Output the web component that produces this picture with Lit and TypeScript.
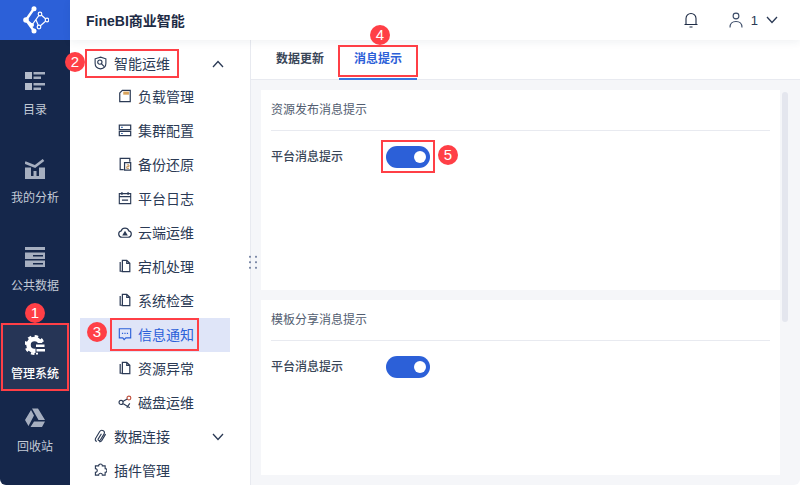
import { css, html, LitElement, svg } from 'lit';
import { customElement } from 'lit/decorators.js';

const pageIcon = svg`<path d="M2.500 3.500v10.500h2M5 1.500h5l3.500 3.500v9.500H5z M10 1.500v3.500h3.500" fill="none" stroke="currentColor" stroke-width="1.400"/>`;

const subIcons: Record<string, unknown> = {
  load: svg`<path d="M5 1.500h9v13H2V4.500z" fill="none" stroke="currentColor" stroke-width="1.400"/><path d="M6 3v3.500h6.500V3" fill="#d9a45c"/>`,
  cluster: svg`<path d="M1.500 2.500h13v5h-13zM1.500 9.500h13v5h-13z" fill="none" stroke="currentColor" stroke-width="1.400"/><path d="M3.500 5h2M3.500 12h2" stroke="#3f6fb0" stroke-width="1.300"/>`,
  backup: svg`<path d="M13.500 5.500V1.500H2.500v13h4" fill="none" stroke="currentColor" stroke-width="1.400"/><path d="M7.500 6.500h7v8.500h-7z" fill="none" stroke="currentColor" stroke-width="1.400"/><path d="M10 9h2.500v2H10v2h2.500" fill="none" stroke="#b8803f" stroke-width="1"/>`,
  log: svg`<path d="M1.500 3h13v11.500h-13zM1.500 6.500h13M4.500 1v3.500M11.500 1v3.500M4.500 10.500h7" fill="none" stroke="currentColor" stroke-width="1.300"/>`,
  cloud: svg`<path d="M4.500 14a3.700 3.700 0 0 1-.8-7.300 4.500 4.500 0 0 1 8.600 0A3.700 3.700 0 0 1 11.500 14z" fill="none" stroke="currentColor" stroke-width="1.400"/><path d="M8 6.500l3.200 5.500H4.800z" fill="currentColor"/>`,
  page: pageIcon,
  chat: svg`<path d="M1.500 2h13v10.500H9l-2 2-1.500-2h-4z" fill="none" stroke="currentColor" stroke-width="1.300"/><path d="M4.500 7.200h1.400M7.300 7.200h1.400M10.100 7.200h1.400" stroke="currentColor" stroke-width="1.500"/>`,
  disk: svg`<circle cx="3.500" cy="8.500" r="2.300" fill="none" stroke="currentColor" stroke-width="1.300"/><circle cx="12.500" cy="3.500" r="2.200" fill="none" stroke="#c0503c" stroke-width="1.300"/><path d="M5.500 7.500l5-2.800M6 10l7.500 4.500M13.500 9.500l-3.500 5" stroke="currentColor" stroke-width="1.300" fill="none"/>`,
};

const chevron = (up: boolean) => html`<svg class="chev" viewBox="0 0 12 8" width="12" height="8">
  <path d=${up ? 'M1 7l5-5.500L11 7' : 'M1 1l5 5.500L11 1'} fill="none" stroke="#2b3a55" stroke-width="1.300" />
</svg>`;

const railItems = [
  {
    label: '目录',
    icon: svg`<path d="M0 1h7v7H0zM0 12h7v7H0z" fill="#b4bccb"/><path d="M8.500 1H20v2.500H8.500zM8.500 5.500H16V8H8.500zM8.500 12H20v2.500H8.500zM8.500 16.500H16V19H8.500z" fill="currentColor"/>`,
  },
  {
    label: '我的分析',
    icon: svg`<path d="M0 3.500l10 4 8.500-6.500" fill="none" stroke="currentColor" stroke-width="2.600"/><path d="M0 8.500h6V17h8V8.500h6V20H0z M8.500 12h3v5h-3z" fill="currentColor"/>`,
  },
  {
    label: '公共数据',
    icon: svg`<path d="M0 0h20v3H0z" fill="currentColor"/><path fill-rule="evenodd" d="M0 5.500h20V12H0zM8 8v1.500h10V8zM0 13.500h20V20H0zM8 16v1.500h10V16z" fill="currentColor"/>`,
  },
  {
    label: '管理系统',
    active: true,
    icon: svg`<circle cx="9.500" cy="10" r="6" fill="none" stroke="#fff" stroke-width="4.500"/><circle cx="9.500" cy="10" r="8.800" fill="none" stroke="#fff" stroke-width="2.400" stroke-dasharray="3.500 3.400"/><path d="M10.500 8h9.500v12h-9.500z" fill="#263556"/><path d="M11 9.500h8.500v2.500H11zM11.500 14h8.500v2.500h-8.500zM11 17.800h2v1.700h-2z" fill="#fff"/>`,
  },
  {
    label: '回收站',
    icon: svg`<path d="M7 .5h6l7 11.500h-6.500zM6 2L9 7.500 3.500 18 0 12zM5.500 19L9 13.500h11L17 19z" fill="currentColor"/>`,
  },
];

const subItems = [
  ['load', '负载管理'],
  ['cluster', '集群配置'],
  ['backup', '备份还原'],
  ['log', '平台日志'],
  ['cloud', '云端运维'],
  ['page', '宕机处理'],
  ['page', '系统检查'],
  ['chat', '信息通知'],
  ['page', '资源异常'],
  ['disk', '磁盘运维'],
];

// red annotation boxes and numbered badges drawn over the screenshot
const marks = [
  { n: 1, x: 35, y: 313, box: [1, 323, 68, 68] },
  { n: 2, x: 75, y: 62, box: [85, 49, 94, 29] },
  { n: 3, x: 97, y: 332, box: [110, 318, 89, 33] },
  { n: 4, x: 380, y: 35, box: [338, 45, 80, 32] },
  { n: 5, x: 448, y: 155, box: [381, 140, 54, 33] },
];

@customElement('app-root')
export class App extends LitElement {
  static styles = css`
    :host {
      display: block;
      width: 800px;
      height: 485px;
      font-family: 'Liberation Sans', 'Noto Sans CJK SC', sans-serif;
      color: #2b3a55;
      --blue: #2c60d8;
    }

    .app {
      position: relative;
      display: flex;
      width: 800px;
      height: 485px;
      overflow: hidden;
      background: #f5f6f9;
      border-radius: 0 0 6px 6px;
    }

    .rail {
      flex: none;
      width: 70px;
      background: #15274b;
      display: flex;
      flex-direction: column;
      color: #a6afc0;
    }

    .logo {
      height: 40px;
      background: var(--blue);
      display: flex;
      align-items: center;
      justify-content: center;
    }

    .rail-item {
      height: 88px;
      display: flex;
      flex-direction: column;
      align-items: center;
      justify-content: flex-end;
      gap: 10px;
      font-size: 12px;
      line-height: 18px;
      color: #c3cad6;
      padding-bottom: 12px;
      box-sizing: border-box;
    }

    .rail-item svg {
      color: #a6afc0;
    }

    .rail-item:nth-child(2) {
      height: 91px;
    }

    .rail-item.active {
      height: 68px;
      margin-top: 16px;
      padding-bottom: 8px;
      background: #263556;
      color: #fff;
      font-weight: 500;
    }

    .rail-item.last {
      height: 77px;
    }

    .main {
      flex: 1;
      display: flex;
      flex-direction: column;
      min-width: 0;
    }

    .top {
      height: 40px;
      flex: none;
      background: #fff;
      display: flex;
      align-items: center;
      padding: 0 22px 0 16px;
      box-shadow: 0 2px 8px rgba(30, 50, 90, 0.07);
      position: relative;
      z-index: 1;
    }

    .brand {
      font-size: 14px;
      font-weight: 700;
      color: #1d2b45;
    }

    .tools {
      margin-left: auto;
      display: flex;
      align-items: center;
      font-size: 13px;
    }

    .tools .user {
      margin-left: 31px;
      margin-right: 8px;
    }

    .tools .chev {
      margin-left: 8px;
    }

    .body {
      flex: 1;
      display: flex;
      min-height: 0;
    }

    .menu {
      flex: none;
      width: 180px;
      background: #fff;
      border-right: 1px solid #e8eaf0;
      padding-top: 7px;
      font-size: 14px;
      color: #2b3a55;
    }

    .row {
      height: 34px;
      display: flex;
      align-items: center;
      gap: 7px;
      padding: 0 0 2px 14px;
      margin-left: 10px;
      position: relative;
      white-space: nowrap;
      box-sizing: border-box;
    }

    .row:first-child {
      height: 33px;
    }

    .row > .chev {
      position: absolute;
      left: 132px;
      top: 13px;
    }

    .row.sub {
      padding-left: 38px;
      margin-right: 20px;
      gap: 6px;
    }

    .row.sub.on {
      background: #dfe5f8;
      color: var(--blue);
    }

    .content {
      flex: 1;
      min-width: 0;
      display: flex;
      flex-direction: column;
      position: relative;
    }

    .tabs {
      flex: none;
      height: 40px;
      background: #fff;
      border-bottom: 1px solid #e8eaf0;
      display: flex;
      padding-left: 25px;
      gap: 16px;
      box-sizing: border-box;
      font-size: 12px;
      font-weight: 700;
    }

    .tab {
      width: 48px;
      text-align: center;
      line-height: 39px;
      height: 40px;
      box-sizing: border-box;
      color: #3a4658;
    }

    .tab.on {
      width: 78px;
      margin-left: -1px;
      color: #2c60d8;
      border-bottom: 2px solid #3a78e0;
    }

    .panels {
      flex: 1;
      padding: 10px 20px 10px 10px;
      display: flex;
      flex-direction: column;
      gap: 10px;
      min-height: 0;
    }

    .panel {
      background: #fff;
      padding: 0 10px;
      height: 200px;
      flex: none;
    }

    .panel.short {
      height: 175px;
    }

    .panel h2 {
      margin: 0;
      height: 40px;
      line-height: 40px;
      border-bottom: 1px solid #e8eaf0;
      font-size: 12px;
      font-weight: 400;
      color: #525d70;
    }

    .setting {
      display: flex;
      align-items: center;
      margin-top: 15px;
      height: 22px;
      font-size: 12px;
      font-weight: 500;
      color: #3a4658;
    }

    .setting span {
      margin-bottom: 3px;
    }

    .switch {
      margin-left: 43px;
      width: 44px;
      height: 22px;
      border-radius: 11px;
      background: var(--blue);
      display: flex;
      align-items: center;
      justify-content: flex-end;
      padding-right: 4px;
      box-sizing: border-box;
    }

    .switch i {
      width: 12px;
      height: 12px;
      border-radius: 50%;
      background: #fff;
    }

    .scroll {
      position: absolute;
      left: 531px;
      top: 52px;
      width: 6px;
      height: 230px;
      border-radius: 3px;
      background: #e4e6ee;
    }

    .grip {
      position: absolute;
      left: -4px;
      top: 214px;
      width: 12px;
      height: 16px;
      background: radial-gradient(circle, #7d8aa8 0.8px, transparent 1px) 0 0 / 6px 5.500px;
    }

    .box {
      position: absolute;
      box-sizing: border-box;
      border: 2px solid #ff3f46;
      z-index: 2;
    }

    .badge {
      position: absolute;
      width: 20px;
      height: 20px;
      margin: -10px 0 0 -10px;
      border-radius: 50%;
      background: #ff3f46;
      color: #fff;
      font-size: 15px;
      line-height: 20px;
      text-align: center;
      z-index: 3;
    }
  `;

  render() {
    return html`
      <div class="app">
        <nav class="rail">
          <div class="logo">
            <svg viewBox="0 0 28 28" width="28" height="28" fill="none" stroke="#fff">
              <path d="M13 2.500L5 14l8 11M5 14l6 5" stroke-width="2.400" />
              <path d="M11 19l8-11 7 6-8 7-3-7" stroke-width="1.200" />
              <g fill="#fff" stroke="none">
                <circle cx="13" cy="2.800" r="2.500" /><circle cx="5" cy="14" r="2.800" /><circle cx="13" cy="25" r="2.500" />
                <circle cx="11" cy="19" r="2" />
              </g>
              <g fill="#2c60d8" stroke-width="1.200">
                <circle cx="19" cy="8" r="1.800" /><circle cx="26" cy="14" r="1.800" /><circle cx="18" cy="21" r="1.800" />
              </g>
            </svg>
          </div>
          ${railItems.map(
            (item, i) => html`<div class="rail-item ${item.active ? 'active' : ''} ${i === railItems.length - 1 ? 'last' : ''}">
              <svg viewBox="0 0 20 20" width="20" height="20">${item.icon}</svg>
              <span>${item.label}</span>
            </div>`
          )}
        </nav>
        <div class="main">
          <header class="top">
            <span class="brand">FineBI商业智能</span>
            <div class="tools">
              <svg viewBox="0 0 14 16" width="14" height="16" fill="none" stroke="#1d2b45" stroke-width="1.100">
                <path d="M2 12.500V6.500a5 5 0 0 1 10 0v6M.5 12.500h13M5.500 15h3" />
              </svg>
              <svg class="user" viewBox="0 0 14 16" width="14" height="16" fill="none" stroke="#3a4a66" stroke-width="1.100">
                <circle cx="7" cy="4" r="2.900" /><path d="M1 15.500c0-3.600 2.400-6 6-6s6 2.400 6 6" />
              </svg>
              <span>1</span>
              ${chevron(false)}
            </div>
          </header>
          <div class="body">
            <aside class="menu">
              <div class="row">
                <svg viewBox="0 0 14 14" width="13" height="14" fill="none" stroke="#2b3a55" stroke-width="1.200">
                  <path d="M7 .7l5.800 1.800v5c0 3-2.700 5.200-5.800 5.800-3.100-.6-5.800-2.800-5.800-5.800v-5z" />
                  <circle cx="6.300" cy="6" r="2.300" /><path d="M8 7.800l3 3" />
                </svg>
                <span>智能运维</span>${chevron(true)}
              </div>
              ${subItems.map(
                ([icon, label]) => html`<div class="row sub ${label === '信息通知' ? 'on' : ''}">
                  <svg viewBox="0 0 16 16" width="14" height="14">${subIcons[icon]}</svg>
                  <span>${label}</span>
                </div>`
              )}
              <div class="row">
                <svg viewBox="0 0 14 14" width="13" height="14" fill="none" stroke="#2b3a55" stroke-width="1.200">
                  <path d="M3 13c-1.500-.5-2-2-1.200-3.500L6 2.500C7 .8 8.500.5 10 1.300s1.500 2.200.7 3.700L7 11c-.6 1-1.500 1.100-2.100.7s-.6-1.100-.3-1.600L8 4.500M5.500 13c1 .5 2 0 2.800-1L12.500 5" />
                </svg>
                <span>数据连接</span>${chevron(false)}
              </div>
              <div class="row">
                <svg viewBox="0 0 14 14" width="13" height="14" fill="none" stroke="#2b3a55" stroke-width="1.200">
                  <path d="M5 2.500a2 2 0 0 1 4 0h3v3a2 2 0 0 1 0 4v3H9a2 2 0 0 0-4 0H1.500V9.500a2 2 0 0 0 0-4V2.500z" />
                </svg>
                <span>插件管理</span>
              </div>
            </aside>
            <section class="content">
              <div class="tabs">
                <div class="tab">数据更新</div>
                <div class="tab on">消息提示</div>
              </div>
              <div class="panels">
                <div class="panel">
                  <h2>资源发布消息提示</h2>
                  <div class="setting"><span>平台消息提示</span><div class="switch"><i></i></div></div>
                </div>
                <div class="panel short">
                  <h2>模板分享消息提示</h2>
                  <div class="setting"><span>平台消息提示</span><div class="switch"><i></i></div></div>
                </div>
              </div>
              <div class="scroll"></div>
              <div class="grip"></div>
            </section>
          </div>
        </div>
        ${marks.map(
          (m) => html`<div
              class="box"
              style="left:${m.box[0]}px;top:${m.box[1]}px;width:${m.box[2]}px;height:${m.box[3]}px"
            ></div>
            <div class="badge" style="left:${m.x}px;top:${m.y}px">${m.n}</div>`
        )}
      </div>
    `;
  }
}
